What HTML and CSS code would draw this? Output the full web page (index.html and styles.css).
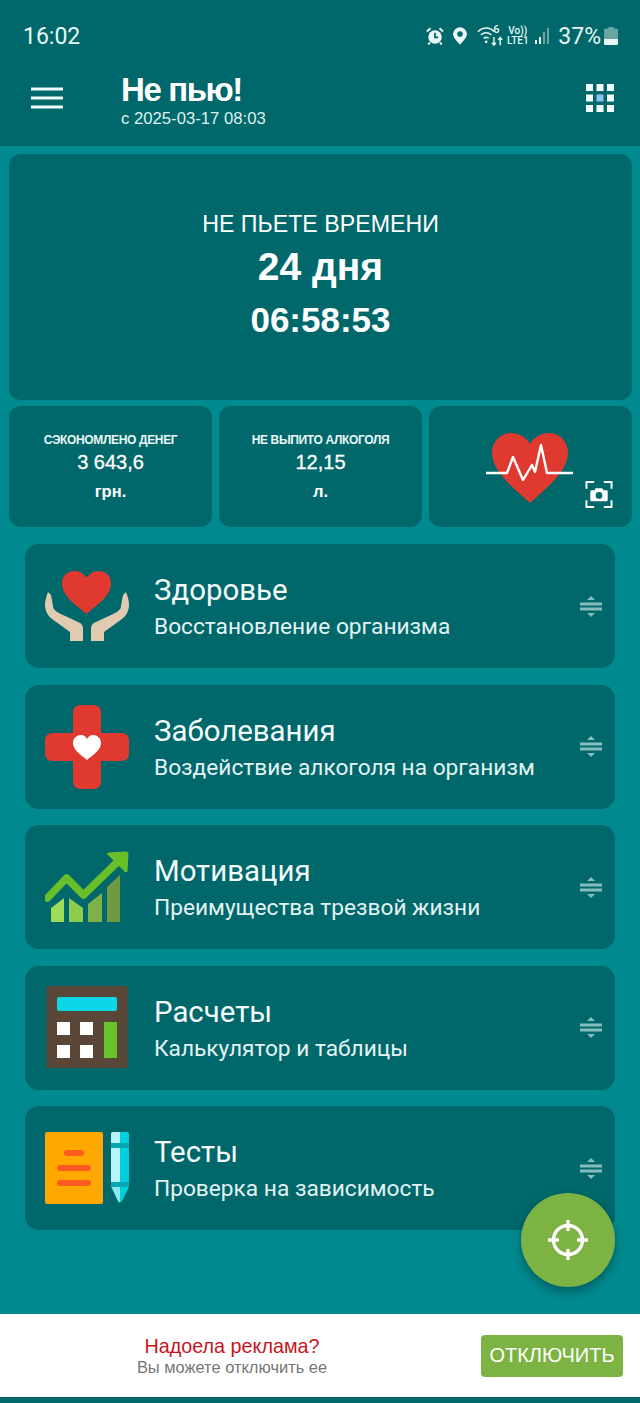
FILE: index.html
```html
<!DOCTYPE html>
<html lang="ru">
<head>
    <meta charset="UTF-8" />
    <title>Не пью!</title>
    <link rel="stylesheet" href="styles.css">
</head>
<body>
    <!-- шапка -->
    <header class="top">
        <div class="status">
            <span class="status-time">16:02</span>
            <div class="status-icons">
                <svg class="ic-alarm" viewBox="0 0 20 20"><circle cx="10" cy="11" r="7.500" fill="#e8f6f5"/><path d="M10 6.500v5h3.500" fill="none" stroke="#00686a" stroke-width="2"/><path d="M1 5l4-3.500M19 5l-4-3.500M4.500 17l-2 2.500M15.500 17l2 2.500" stroke="#e8f6f5" stroke-width="2.200"/></svg>
                <svg class="ic-pin" viewBox="0 0 16 20"><path fill-rule="evenodd" d="M8 0a8 8 0 0 1 8 7.500c0 4.500-5 9-8 12.500C5 16.500 0 12 0 7.500A8 8 0 0 1 8 0zm0 4.500a3.200 3.200 0 1 0 0 6.400 3.200 3.200 0 0 0 0-6.400z" fill="#e8f6f5"/></svg>
                <div class="ic-wifi">
                    <svg viewBox="0 0 30 22"><path d="M1 6.500c5-5 12-5 17 0M4 10c3.500-3 7.500-3 11 0M7 13.500c2-1.500 3.500-1.500 5 0" fill="none" stroke="#e8f6f5" stroke-width="1.600"/><circle cx="9.500" cy="17" r="1.400" fill="#e8f6f5"/><path d="M17.500 12v8M15.500 18l2 2.500 2-2.500M24 20.500v-8M22 15l2-2.500 2 2.500" fill="none" stroke="#e8f6f5" stroke-width="1.500"/></svg>
                    <span class="wifi-six">6</span>
                </div>
                <div class="volte"><span>Vo))</span><span>LTE1</span></div>
                <svg class="ic-signal" viewBox="0 0 14 18"><rect x="0" y="13" width="2" height="4" fill="#e8f6f5"/><rect x="4" y="10" width="2" height="7" fill="#e8f6f5"/><rect x="8" y="5" width="2" height="12" fill="#6aa5a6"/><rect x="12" y="1" width="2" height="16" fill="#6aa5a6"/></svg>
                <span class="status-batt">37%</span>
                <svg class="ic-batt" viewBox="0 0 14 18"><path d="M4.500 0h5v1.500h3q1.500 0 1.500 1.500v13.500q0 1.500-1.500 1.500h-11Q0 18 0 16.500V3q0-1.500 1.500-1.500h3z" fill="#6aa5a6"/><path d="M0 12h14v4.500q0 1.500-1.500 1.500h-11Q0 18 0 16.500z" fill="#e8f6f5"/></svg>
            </div>
        </div>
        <div class="toolbar">
            <svg class="ic-menu" viewBox="0 0 32 22"><path d="M0 2h32M0 11h32M0 20h32" stroke="#f2fbfb" stroke-width="3"/></svg>
            <div class="toolbar-title">
                <h1>Не пью!</h1>
                <p>с 2025-03-17 08:03</p>
            </div>
            <svg class="ic-grid" viewBox="0 0 28 28" fill="#f2fbfb">
                <rect width="7" height="7"/><rect x="10.500" width="7" height="7"/><rect x="21" width="7" height="7"/>
                <rect y="10.500" width="7" height="7"/><rect x="10.500" y="10.500" width="7" height="7" fill="#8fc1ee"/><rect x="21" y="10.500" width="7" height="7"/>
                <rect y="21" width="7" height="7"/><rect x="10.500" y="21" width="7" height="7"/><rect x="21" y="21" width="7" height="7"/>
            </svg>
        </div>
    </header>

    <main class="content">
        <!-- таймер -->
        <section class="timer">
            <div class="timer-label">НЕ ПЬЕТЕ ВРЕМЕНИ</div>
            <div class="timer-days">24 дня</div>
            <div class="timer-clock">06:58:53</div>
        </section>

        <section class="stats">
            <div class="stat">
                <div class="stat-label">СЭКОНОМЛЕНО ДЕНЕГ</div>
                <div class="stat-value">3 643,6</div>
                <div class="stat-unit">грн.</div>
            </div>
            <div class="stat">
                <div class="stat-label">НЕ ВЫПИТО АЛКОГОЛЯ</div>
                <div class="stat-value">12,15</div>
                <div class="stat-unit">л.</div>
            </div>
            <div class="stat stat-heart">
                <svg class="ic-heart" viewBox="0 0 88 72">
                    <path d="M44 71C30 58 6 40 6 21 6 9 15 1 25 1c8 0 15 4 19 11C48 5 55 1 63 1c10 0 19 8 19 20 0 19-24 37-38 50z" fill="#e03a30"/>
                    <path d="M0 41H21L27 25L37 48L46 33L49 40L55 13L61 41H87" fill="none" stroke="#fff" stroke-width="2.400" stroke-linejoin="round"/>
                </svg>
                <svg class="ic-shot" viewBox="0 0 28 28">
                    <path d="M1 8V1h8M19 1h8v7M27 20v7h-8M9 27H1v-7" fill="none" stroke="#fff" stroke-width="2"/>
                    <path fill-rule="evenodd" d="M10.500 7.500h7l1.200 2H22q1 0 1 1V20q0 1-1 1H6q-1 0-1-1v-9.500q0-1 1-1h3.300zM14 11.500a3.500 3.500 0 1 0 0 7 3.500 3.500 0 0 0 0-7z" fill="#fff"/>
                </svg>
            </div>
        </section>

        <!-- пункты меню -->
        <nav class="menu">
            <a class="menu-item">
                <svg class="menu-icon" viewBox="0 0 84 72">
                    <path d="M41.500 44C30 34 17 26 17 13 17 5 23 1 30 1c5 0 9 3 11.500 7C44 4 48 1 53 1c7 0 13 4 13 12 0 13-13 21-24.500 31z" fill="#e03a30"/>
                    <path d="M3 22C1 27 0 31 0 35 0 41 3 46 7 49L25 62V71H38V59C38 55 36 53 33 52L18 45C12 42 8 40 8 36L6 25Z" fill="#e0cbb0"/>
                    <path d="M81 22C83 27 84 31 84 35 84 41 81 46 77 49L59 62V71H46V59C46 55 48 53 51 52L66 45C72 42 76 40 76 36L78 25Z" fill="#e0cbb0"/>
                </svg>
                <div class="menu-text">
                    <div class="menu-title">Здоровье</div>
                    <div class="menu-sub">Восстановление организма</div>
                </div>
                <svg class="ic-sort" viewBox="0 0 22 21"><path d="M11 0l4 4H7zM0 6.500h22v3H0zM0 11.500h22v3H0zM11 21l-4-4h8z" fill="#84bdbe"/></svg>
            </a>
            <a class="menu-item">
                <svg class="menu-icon" viewBox="0 0 84 84">
                    <path d="M28 8q0-8 8-8h12q8 0 8 8v20h20q8 0 8 8v12q0 8-8 8H56v20q0 8-8 8H36q-8 0-8-8V56H8q-8 0-8-8V36q0-8 8-8h20z" fill="#e03a30"/>
                    <path d="M42 55C36 50 28 45 28 38c0-5 4-8 8-8 3 0 5 2 6 4 1-2 3-4 6-4 4 0 8 3 8 8 0 7-8 12-14 17z" fill="#fff"/>
                </svg>
                <div class="menu-text">
                    <div class="menu-title">Заболевания</div>
                    <div class="menu-sub">Воздействие алкоголя на организм</div>
                </div>
                <svg class="ic-sort" viewBox="0 0 22 21"><path d="M11 0l4 4H7zM0 6.500h22v3H0zM0 11.500h22v3H0zM11 21l-4-4h8z" fill="#84bdbe"/></svg>
            </a>
            <a class="menu-item">
                <svg class="menu-icon" viewBox="0 0 84 72">
                    <path d="M6 71V57l13-10v24z" fill="#9edb57"/>
                    <path d="M24 71V47l14 10v14z" fill="#8ccb4c"/>
                    <path d="M43 71V53l14-11v29z" fill="#7fb14a"/>
                    <path d="M62 71V36l13-12v47z" fill="#6f9a42"/>
                    <path d="M2.500 47l19-20 17 17 36-35" fill="none" stroke="#69bf2a" stroke-width="7.500" stroke-linecap="round" stroke-linejoin="round"/>
                    <path d="M62 3q0-1.500 1.500-1.500L81 0.500q2.500 0 2.500 2.500L82.500 20q-.5 2-2.500 1z" fill="#69bf2a"/>
                </svg>
                <div class="menu-text">
                    <div class="menu-title">Мотивация</div>
                    <div class="menu-sub">Преимущества трезвой жизни</div>
                </div>
                <svg class="ic-sort" viewBox="0 0 22 21"><path d="M11 0l4 4H7zM0 6.500h22v3H0zM0 11.500h22v3H0zM11 21l-4-4h8z" fill="#84bdbe"/></svg>
            </a>
            <a class="menu-item">
                <svg class="menu-icon" viewBox="0 0 84 84">
                    <rect x="1.500" width="81" height="82" fill="#5a4636"/>
                    <rect x="12" y="11" width="60" height="14" rx="2" fill="#0ed6e6"/>
                    <rect x="12" y="36" width="13" height="13" fill="#fff"/>
                    <rect x="35" y="36" width="13" height="13" fill="#fff"/>
                    <rect x="12" y="59" width="13" height="13" fill="#fff"/>
                    <rect x="35" y="59" width="13" height="13" fill="#fff"/>
                    <rect x="59" y="36" width="13" height="36" fill="#69c42c"/>
                </svg>
                <div class="menu-text">
                    <div class="menu-title">Расчеты</div>
                    <div class="menu-sub">Калькулятор и таблицы</div>
                </div>
                <svg class="ic-sort" viewBox="0 0 22 21"><path d="M11 0l4 4H7zM0 6.500h22v3H0zM0 11.500h22v3H0zM11 21l-4-4h8z" fill="#84bdbe"/></svg>
            </a>
            <a class="menu-item">
                <svg class="menu-icon" viewBox="0 0 84 72">
                    <rect width="58" height="72" rx="2" fill="#ffa800"/>
                    <rect x="19" y="18" width="20" height="6" rx="3" fill="#ff5a1f"/>
                    <rect x="12" y="33" width="34" height="6" rx="3" fill="#ff5a1f"/>
                    <rect x="12" y="48" width="34" height="6" rx="3" fill="#ff5a1f"/>
                    <path d="M66 2q0-2 2-2h14q2 0 2 2v49H66z" fill="#00d0de"/>
                    <path d="M66 2q0-2 2-2h7v51h-9z" fill="#b4f4fa"/>
                    <rect x="66" y="11" width="18" height="5" fill="#06a7b4"/>
                    <rect x="66" y="50" width="18" height="5" fill="#06a7b4"/>
                    <path d="M66.500 55H84L77 69q-2 2.500-4 0z" fill="#00d0de"/>
                    <path d="M66.500 55H75V70.500q-1 0-2-1.500z" fill="#8ce9f2"/>
                </svg>
                <div class="menu-text">
                    <div class="menu-title">Тесты</div>
                    <div class="menu-sub">Проверка на зависимость</div>
                </div>
                <svg class="ic-sort" viewBox="0 0 22 21"><path d="M11 0l4 4H7zM0 6.500h22v3H0zM0 11.500h22v3H0zM11 21l-4-4h8z" fill="#84bdbe"/></svg>
            </a>
        </nav>

        <button class="fab">
            <svg viewBox="0 0 40 40" fill="none" stroke="#fff" stroke-width="3.400">
                <circle cx="20" cy="20" r="14.500"/>
                <path d="M20 0v11M20 29v11M0 20h11M29 20h11"/>
            </svg>
        </button>
    </main>

    <!-- реклама -->
    <footer class="ad">
        <div class="ad-text">
            <div class="ad-title">Надоела реклама?</div>
            <div class="ad-sub">Вы можете отключить ее</div>
        </div>
        <button class="ad-button">ОТКЛЮЧИТЬ</button>
    </footer>
    <div class="bottom-strip"></div>
</body>
</html>
```

FILE: styles.css
```css
/* общие стили */
html, body {
    margin: 0;
    padding: 0;
    height: 100%;
    overflow: hidden;
}

body {
    display: flex;
    flex-direction: column;
    background: #00898e;
    color: #fff;
    font-family: "Liberation Sans", Arial, sans-serif;
}

/* шапка */
.top {
    height: 146px;
    background: #00686a;
    flex-shrink: 0;
}

.status {
    height: 60px;
    padding: 12px 22px 0 23px;
    box-sizing: border-box;
    display: flex;
    align-items: center;
    justify-content: space-between;
    font-family: Roboto, sans-serif;
    color: #e8f6f5;
}

.status-time {
    font-size: 23px;
}

.status-icons {
    display: flex;
    align-items: center;
}

.ic-alarm {
    width: 18px;
    height: 18px;
    margin-right: 9px;
}

.ic-pin {
    width: 14px;
    height: 18px;
    margin-right: 10px;
}

.ic-wifi {
    width: 29px;
    height: 22px;
    position: relative;
}

.ic-wifi svg {
    width: 29px;
    height: 22px;
    display: block;
}

.wifi-six {
    position: absolute;
    left: 16px;
    top: -2px;
    font-size: 11px;
    font-weight: 500;
}

.volte {
    display: flex;
    flex-direction: column;
    align-items: center;
    font-size: 10px;
    line-height: 10px;
    font-weight: 500;
    width: 23px;
}

.ic-signal {
    width: 14px;
    height: 18px;
    margin-left: 6px;
}

.status-batt {
    font-size: 23px;
    margin-left: 9px;
}

.ic-batt {
    width: 14px;
    height: 18px;
    margin-left: 3px;
}

.toolbar {
    height: 86px;
    display: flex;
    align-items: center;
    padding: 0 26px 10px 31px;
    box-sizing: border-box;
}

.ic-menu {
    width: 32px;
    height: 22px;
    flex-shrink: 0;
}

.toolbar-title {
    flex: 1;
    margin-left: 58px;
    margin-top: 3px;
}

.toolbar-title h1 {
    margin: 0;
    font-size: 33px;
    line-height: 38px;
    font-weight: bold;
    letter-spacing: -1.400px;
}

.toolbar-title p {
    margin: 0;
    font-size: 16.700px;
    line-height: 19px;
    color: #dff1f0;
}

.ic-grid {
    width: 28px;
    height: 28px;
    flex-shrink: 0;
}

/* основная область */
.content {
    flex: 1;
    position: relative;
    padding: 8px 8px 0 9px;
    display: flex;
    flex-direction: column;
    gap: 6px;
}

.timer {
    height: 246px;
    background: #00686a;
    border-radius: 12px;
    box-sizing: border-box;
    padding-top: 55px;
    text-align: center;
}

.timer-label {
    font-size: 23.200px;
    line-height: 30px;
}

.timer-days {
    font-size: 39px;
    font-weight: bold;
    line-height: 50px;
    margin-top: 3px;
}

.timer-clock {
    font-size: 35px;
    font-weight: bold;
    line-height: 50px;
    margin-top: 3px;
}

.stats {
    display: grid;
    grid-template-columns: repeat(3, 1fr);
    gap: 7px;
    height: 121px;
}

.stat {
    background: #00686a;
    border-radius: 12px;
    text-align: center;
    padding-top: 25px;
    box-sizing: border-box;
    position: relative;
}

.stat-label {
    font-size: 12px;
    line-height: 18px;
    font-weight: bold;
    color: #eaf6f6;
    letter-spacing: -0.350px;
}

.stat-value {
    font-size: 20px;
    line-height: 26px;
    -webkit-text-stroke: 0.3px #fff;
}

.stat-unit {
    font-size: 16.500px;
    font-weight: bold;
    line-height: 26px;
    margin-top: 3px;
}

.ic-heart {
    position: absolute;
    left: 57px;
    top: 26px;
    width: 88px;
    height: 72px;
}

.ic-shot {
    position: absolute;
    left: 156px;
    top: 75px;
    width: 28px;
    height: 27px;
}

/* меню */
.menu {
    display: flex;
    flex-direction: column;
    gap: 16.500px;
    padding: 11px 17px 0 16px;
}

.menu-item {
    height: 124px;
    background: #00676a;
    border-radius: 14px;
    display: flex;
    align-items: center;
    padding: 0 13px 0 20px;
    box-sizing: border-box;
    font-family: Roboto, sans-serif;
}

.menu-icon {
    width: 84px;
    height: 84px;
    flex-shrink: 0;
}

.menu-text {
    flex: 1;
    margin-left: 25px;
    padding-top: 2px;
}

.menu-title {
    font-size: 29.400px;
    line-height: 36px;
    color: #f4fcfc;
}

.menu-sub {
    font-size: 22.700px;
    line-height: 30px;
    margin-top: 4px;
    color: #e3f3f3;
}

.ic-sort {
    width: 22px;
    height: 21px;
    flex-shrink: 0;
}

.fab {
    position: absolute;
    right: 25px;
    top: 1047px;
    width: 94px;
    height: 94px;
    border: none;
    border-radius: 50%;
    background: #7cb342;
    padding: 27px;
    box-shadow: 0 5px 10px rgba(0, 0, 0, 0.3);
}

.fab svg {
    width: 40px;
    height: 40px;
    display: block;
}

/* реклама */
.ad {
    height: 83px;
    flex-shrink: 0;
    background: #fff;
    display: flex;
    align-items: center;
    justify-content: space-between;
    padding: 0 17px 0 0;
    box-sizing: border-box;
}

.ad-text {
    width: 464px;
    text-align: center;
}

.ad-title {
    font-size: 19.800px;
    line-height: 24px;
    color: #c8141c;
}

.ad-sub {
    font-size: 16.450px;
    line-height: 19px;
    color: #767676;
}

.ad-button {
    width: 142px;
    height: 42px;
    border: none;
    border-radius: 4px;
    background: #7cb342;
    color: #fff;
    font-family: "Liberation Sans", Arial, sans-serif;
    font-size: 20px;
    padding: 0;
}

.bottom-strip {
    height: 6px;
    flex-shrink: 0;
    background: #00686a;
}
```
